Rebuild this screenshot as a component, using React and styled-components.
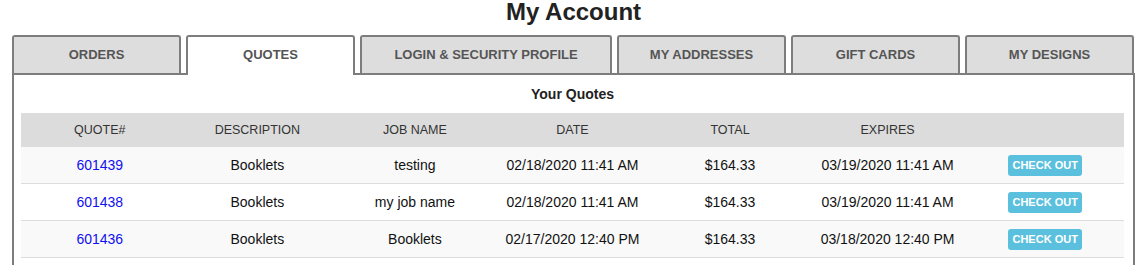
import styled, { createGlobalStyle } from "styled-components";

const GlobalStyle = createGlobalStyle`
  body {
    margin: 0;
    background: #fff;
    font-family: "Liberation Sans", Arial, Helvetica, sans-serif;
  }
`;

const tabs = [
  { id: "orders", label: "ORDERS" },
  { id: "quotes", label: "QUOTES" },
  { id: "login", label: "LOGIN & SECURITY PROFILE", wide: true },
  { id: "addresses", label: "MY ADDRESSES" },
  { id: "gift", label: "GIFT CARDS" },
  { id: "designs", label: "MY DESIGNS" },
];

const quotes = [
  {
    id: "601439",
    description: "Booklets",
    job: "testing",
    date: "02/18/2020 11:41 AM",
    total: "$164.33",
    expires: "03/19/2020 11:41 AM",
  },
  {
    id: "601438",
    description: "Booklets",
    job: "my job name",
    date: "02/18/2020 11:41 AM",
    total: "$164.33",
    expires: "03/19/2020 11:41 AM",
  },
  {
    id: "601436",
    description: "Booklets",
    job: "Booklets",
    date: "02/17/2020 12:40 PM",
    total: "$164.33",
    expires: "03/18/2020 12:40 PM",
  },
];

const columns = ["QUOTE#", "DESCRIPTION", "JOB NAME", "DATE", "TOTAL", "EXPIRES", ""];

const App = () => {
  const active = "quotes";
  return (
    <>
      <GlobalStyle />
      <Page>
        <Title>My Account</Title>
        <TabBar>
          {tabs.map((tab) => (
            <Tab key={tab.id} $wide={tab.wide} $active={tab.id === active}>
              {tab.label}
            </Tab>
          ))}
        </TabBar>
        <Panel>
          <PanelHeading>Your Quotes</PanelHeading>
          <QuoteTable>
            <thead>
              <tr>
                {columns.map((col, i) => (
                  <HeadCell key={i}>{col}</HeadCell>
                ))}
              </tr>
            </thead>
            <tbody>
              {quotes.map((q) => (
                <Row key={q.id}>
                  <Cell>
                    <QuoteLink href="#">{q.id}</QuoteLink>
                  </Cell>
                  <Cell>{q.description}</Cell>
                  <Cell>{q.job}</Cell>
                  <Cell>{q.date}</Cell>
                  <Cell>{q.total}</Cell>
                  <Cell>{q.expires}</Cell>
                  <Cell>
                    <CheckoutButton>CHECK OUT</CheckoutButton>
                  </Cell>
                </Row>
              ))}
            </tbody>
          </QuoteTable>
        </Panel>
      </Page>
    </>
  );
};

const Page = styled.div`
  width: 1123px;
  margin: 0 0 0 12px;
`;

const Title = styled.h1`
  margin: 0 0 11px;
  font-size: 24px;
  line-height: 24px;
  font-weight: bold;
  color: #222;
  text-align: center;
`;

const TabBar = styled.div`
  display: flex;
  align-items: flex-start;
  gap: 5px;
  position: relative;
  z-index: 1;
`;

const Tab = styled.div`
  box-sizing: border-box;
  width: ${(p) => (p.$wide ? "252px" : "169px")};
  height: ${(p) => (p.$active ? "40px" : "38px")};
  margin-bottom: ${(p) => (p.$active ? "-2px" : "0")};
  padding-top: 10px;
  border: 2px solid #7d7d7d;
  border-bottom: none;
  border-radius: 3px 3px 0 0;
  background: ${(p) => (p.$active ? "#fff" : "#dddddd")};
  color: #555;
  font-size: 13px;
  line-height: 15px;
  font-weight: bold;
  text-align: center;
  cursor: pointer;
`;

const Panel = styled.div`
  border: 2px solid #7d7d7d;
  padding: 10px 9px 20px 7px;
`;

const PanelHeading = styled.div`
  margin-bottom: 10px;
  font-size: 14px;
  line-height: 18px;
  font-weight: bold;
  color: #222;
  text-align: center;
`;

const QuoteTable = styled.table`
  width: 100%;
  border-collapse: collapse;
  table-layout: fixed;
`;

const HeadCell = styled.th`
  height: 34px;
  padding: 0;
  background: #dcdcdc;
  color: #333;
  font-size: 12.5px;
  font-weight: normal;
  text-align: center;
  vertical-align: middle;
`;

const Row = styled.tr`
  &:nth-child(odd) {
    background: #f9f9f9;
  }
  border-bottom: 1px solid #dddddd;
`;

const Cell = styled.td`
  height: 36px;
  padding: 0;
  color: #111;
  font-size: 14px;
  text-align: center;
  vertical-align: middle;
`;

const QuoteLink = styled.a`
  color: #1010f0;
  text-decoration: none;
`;

const CheckoutButton = styled.button`
  width: 74px;
  height: 21px;
  padding: 0;
  border: none;
  border-radius: 3px;
  background: #5bc0de;
  color: #fff;
  font-family: inherit;
  font-size: 11px;
  font-weight: bold;
  cursor: pointer;
`;

export default App;
